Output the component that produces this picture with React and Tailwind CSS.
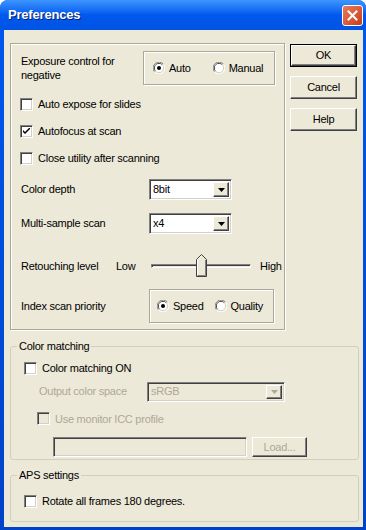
import { useState } from "react";

const face = "bg-[#ECE9D8]";
const raised =
  "border border-t-white border-l-white border-b-[#404040] border-r-[#404040] shadow-[inset_-1px_-1px_0_#808080]";
const sunken =
  "border border-t-[#808080] border-l-[#808080] border-b-white border-r-white shadow-[inset_1px_1px_0_#404040,inset_-1px_-1px_0_#D4D0C8]";

function CheckBox({ checked, disabled, label, onChange }) {
  return (
    <label className="flex items-center gap-[5px] cursor-default select-none">
      <span
        onClick={onChange}
        className={`w-[13px] h-[13px] shrink-0 flex items-center justify-center ${sunken} ${
          disabled ? "bg-[#ECE9D8]" : "bg-white"
        }`}
      >
        {checked && (
          <svg width="7" height="7" viewBox="0 0 7 7">
            <path d="M0 2 L0 4 L2 6 L7 1 L7 -1 L2 4 Z" fill={disabled ? "#ACA899" : "#000"} />
          </svg>
        )}
      </span>
      <span className={disabled ? "text-[#ACA899]" : "text-black"}>{label}</span>
    </label>
  );
}

function Radio({ checked, label, onChange }) {
  return (
    <label className="flex items-center gap-[4px] cursor-default select-none" onClick={onChange}>
      <svg width="12" height="12" viewBox="0 0 12 12" className="shrink-0">
        <path d="M10.5 2.2 A5.5 5.5 0 0 0 1.5 9.8" stroke="#808080" strokeWidth="1" fill="none" />
        <path d="M1.5 9.8 A5.5 5.5 0 0 0 10.5 2.2" stroke="#ffffff" strokeWidth="1" fill="none" />
        <path d="M9.3 2.9 A4.5 4.5 0 0 0 2.6 9.2" stroke="#404040" strokeWidth="1" fill="none" />
        <path d="M2.6 9.2 A4.5 4.5 0 0 0 9.3 2.9" stroke="#D4D0C8" strokeWidth="1" fill="none" />
        <circle cx="6" cy="6" r="4" fill="#fff" />
        {checked && <circle cx="6" cy="6" r="2" fill="#000" />}
      </svg>
      <span>{label}</span>
    </label>
  );
}

function Select({ value, width, height = "h-[21px]", disabled }) {
  return (
    <div
      className={`${width} ${height} ${sunken} ${
        disabled ? "bg-[#ECE9D8] text-[#ACA899]" : "bg-white text-black"
      } flex items-center p-[2px]`}
    >
      <span className="flex-1 pl-[1px] leading-none">{value}</span>
      <span className={`w-[16px] h-full ${face} ${raised} flex items-center justify-center`}>
        <svg width="7" height="4" viewBox="0 0 7 4">
          <path d="M0 0 H7 L3.5 4 Z" fill={disabled ? "#ACA899" : "#000"} />
        </svg>
      </span>
    </div>
  );
}

function Button({ children, primary, disabled, className = "" }) {
  const inner = (
    <div
      className={`w-full h-full ${face} ${raised} flex items-center justify-center ${
        disabled ? "text-[#ACA899]" : "text-black"
      }`}
    >
      {children}
    </div>
  );
  if (primary) {
    return <div className={`${className} border border-black`}>{inner}</div>;
  }
  return <div className={className}>{inner}</div>;
}

function Slider() {
  return (
    <div className="relative w-[100px] h-[24px] flex items-center">
      <div className="w-full h-[4px] border border-t-[#808080] border-l-[#808080] border-b-white border-r-white shadow-[inset_1px_1px_0_#404040]" />
      <svg className="absolute left-[45px] top-0" width="11" height="23" viewBox="0 0 11 23">
        <path d="M0.5 22.5 V5.5 L5.5 0.5 L10.5 5.5 V22.5 Z" fill="#ECE9D8" stroke="#404040" />
        <path d="M1.5 21.5 V5.9 L5.5 1.9" fill="none" stroke="#ffffff" />
        <path d="M9.5 5.9 V21.5 H1.5" fill="none" stroke="#808080" />
      </svg>
    </div>
  );
}

export default function App() {
  const [exposure, setExposure] = useState("auto");
  const [priority, setPriority] = useState("speed");
  const [autoExpose, setAutoExpose] = useState(false);
  const [autofocus, setAutofocus] = useState(true);
  const [closeUtil, setCloseUtil] = useState(false);
  const [colorMatch, setColorMatch] = useState(false);
  const [rotate, setRotate] = useState(false);

  const etched = "border border-[#ACA899] shadow-[inset_1px_1px_0_#fff,1px_1px_0_#fff]";

  return (
    <div
      className="w-[366px] h-[530px] flex flex-col rounded-t-[8px] bg-gradient-to-b from-[#0058EE] to-[#0043C8] text-[11px] tracking-[-0.25px] text-black"
      style={{ fontFamily: '"Liberation Sans", Arial, sans-serif' }}
    >
      {/* title bar */}
      <div className="h-[30px] shrink-0 flex items-center rounded-t-[8px] bg-gradient-to-b from-[#3D95FF] via-[#0058EE] to-[#0054E3] px-[8px]">
        <span className="flex-1 text-white font-bold text-[13px] tracking-[-0.2px] [text-shadow:1px_1px_0_#0A1F70]">
          Preferences
        </span>
        <div className="w-[21px] h-[21px] mr-[-5px] mt-[1px] rounded-[3px] border border-white bg-gradient-to-br from-[#E97A5B] to-[#C93B14] flex items-center justify-center">
          <svg width="11" height="11" viewBox="0 0 11 11">
            <path d="M1.5 1.5 L9.5 9.5 M9.5 1.5 L1.5 9.5" stroke="#fff" strokeWidth="2" strokeLinecap="square" />
          </svg>
        </div>
      </div>

      {/* body */}
      <div className={`flex-1 ml-[4px] mr-[3px] mb-[3px] ${face} flex flex-col px-[6px]`}>
        <div className="flex mt-[13px]">
          {/* main panel */}
          <div className={`w-[278px] h-[287px] ${etched} pt-[7px] pl-[10px] flex flex-col`}>
            <div className="flex h-[34px] items-center">
              <div className="w-[122px] leading-[14px]">
                Exposure control for
                <br />
                negative
              </div>
              <div className={`w-[132px] h-[34px] ${etched} flex items-center pl-[9px] gap-[22px]`}>
                <Radio label="Auto" checked={exposure === "auto"} onChange={() => setExposure("auto")} />
                <Radio label="Manual" checked={exposure === "manual"} onChange={() => setExposure("manual")} />
              </div>
            </div>

            <div className="flex flex-col mt-[6px]">
              <div className="h-[27px] flex items-center -ml-[1px]">
                <CheckBox label="Auto expose for slides" checked={autoExpose} onChange={() => setAutoExpose(!autoExpose)} />
              </div>
              <div className="h-[27px] flex items-center -ml-[1px]">
                <CheckBox label="Autofocus at scan" checked={autofocus} onChange={() => setAutofocus(!autofocus)} />
              </div>
              <div className="h-[27px] flex items-center -ml-[1px]">
                <CheckBox label="Close utility after scanning" checked={closeUtil} onChange={() => setCloseUtil(!closeUtil)} />
              </div>
            </div>

            <div className="flex items-center mt-[7px]">
              <div className="w-[128px]">Color depth</div>
              <Select value="8bit" width="w-[83px]" />
            </div>
            <div className="flex items-center mt-[13px]">
              <div className="w-[128px]">Multi-sample scan</div>
              <Select value="x4" width="w-[83px]" />
            </div>

            <div className="flex items-center h-[24px] mt-[20px]">
              <div className="w-[95px]">Retouching level</div>
              <div className="w-[35px]">Low</div>
              <Slider />
              <div className="ml-[9px]">High</div>
            </div>

            <div className="flex items-center mt-[11px]">
              <div className="w-[128px]">Index scan priority</div>
              <div className={`w-[125px] h-[34px] ${etched} flex items-center pl-[7px] gap-[11px]`}>
                <Radio label="Speed" checked={priority === "speed"} onChange={() => setPriority("speed")} />
                <Radio label="Quality" checked={priority === "quality"} onChange={() => setPriority("quality")} />
              </div>
            </div>
          </div>

          {/* buttons */}
          <div className="flex flex-col ml-[5px] mt-[1px] gap-[9px]">
            <Button primary className="w-[67px] h-[23px]">OK</Button>
            <Button className="w-[67px] h-[23px]">Cancel</Button>
            <Button className="w-[67px] h-[23px]">Help</Button>
          </div>
        </div>

        {/* color matching */}
        <fieldset className="mt-[10px] w-[349px] h-[120px] border border-[#D0D0BF] rounded-[3px] pl-[6px] pr-[6px]">
          <legend className="px-[2px] leading-[13px]">Color matching</legend>
          <div className="pl-[7px] mt-[7px]">
            <CheckBox label="Color matching ON" checked={colorMatch} onChange={() => setColorMatch(!colorMatch)} />
          </div>
          <div className="flex items-center mt-[5px] pl-[22px]">
            <div className="w-[108px] text-[#ACA899]">Output color space</div>
            <Select value="sRGB" width="w-[138px]" height="h-[20px]" disabled />
          </div>
          <div className="pl-[20px] mt-[9px]">
            <CheckBox label="Use monitor ICC profile" disabled />
          </div>
          <div className="flex items-center mt-[10px] pl-[36px] gap-[5px]">
            <div className={`w-[194px] h-[20px] ${sunken} bg-[#ECE9D8]`} />
            <Button disabled className="w-[55px] h-[20px]">Load...</Button>
          </div>
        </fieldset>

        {/* APS */}
        <fieldset className="mt-[9px] w-[349px] h-[53px] border border-[#D0D0BF] rounded-[3px] pl-[6px]">
          <legend className="px-[2px] leading-[13px]">APS settings</legend>
          <div className="pl-[7px] mt-[11px]">
            <CheckBox label="Rotate all frames 180 degrees." checked={rotate} onChange={() => setRotate(!rotate)} />
          </div>
        </fieldset>
      </div>
    </div>
  );
}
